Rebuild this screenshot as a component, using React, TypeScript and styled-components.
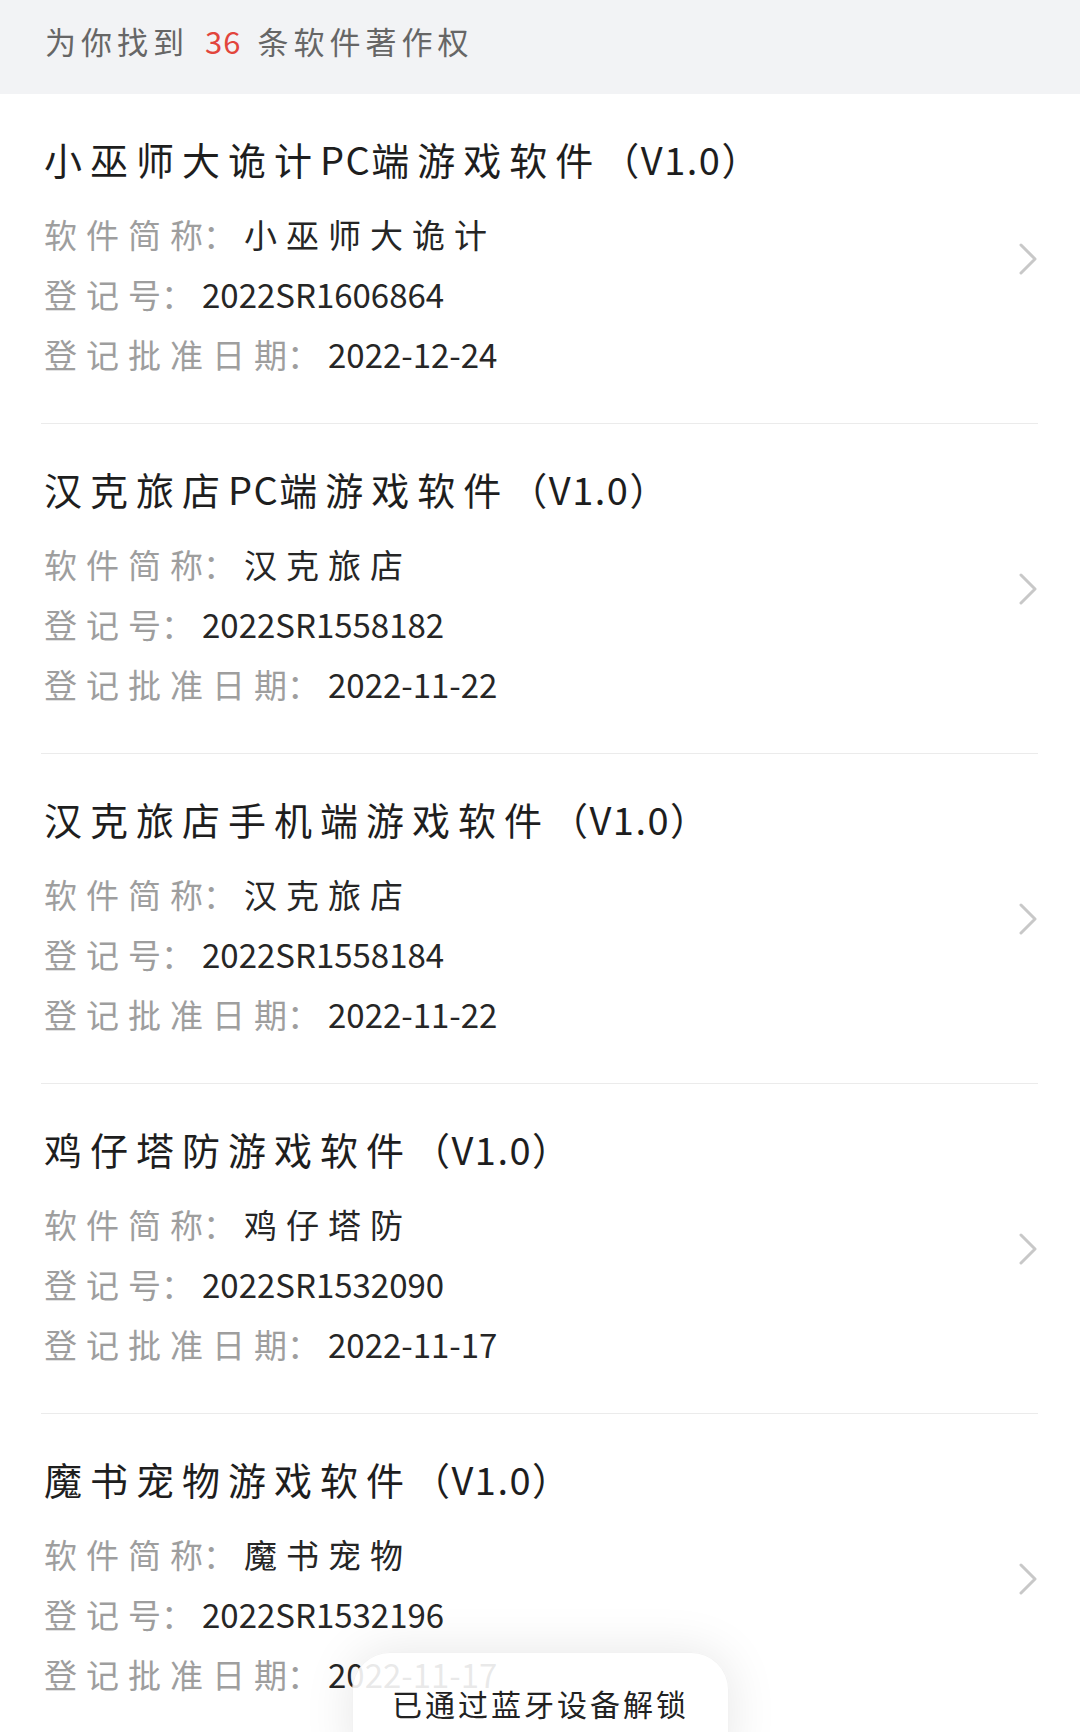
import React from "react";
import styled, { createGlobalStyle } from "styled-components";

const GlobalStyle = createGlobalStyle`
  html, body {
    margin: 0;
    padding: 0;
    background: #ffffff;
  }
  body {
    font-family: "Noto Sans CJK SC", "Noto Sans", sans-serif;
  }
`;

const Page = styled.div`
  position: relative;
  width: 1080px;
  height: 1732px;
  overflow: hidden;
  background: #ffffff;
  font-family: "Noto Sans CJK SC", "Noto Sans", sans-serif;
`;

const Header = styled.div`
  height: 94px;
  background: #f2f3f5;
  display: flex;
  align-items: center;
  padding: 0 0 14px 45px;
  box-sizing: border-box;
  font-size: 31px;
  letter-spacing: 5px;
  color: #666666;
`;

const Count = styled.span`
  color: #e2453c;
  letter-spacing: 1px;
  margin: 0 16px 0 16px;
`;

const List = styled.div`
  margin: 0 42px 0 41px;
`;

const Item = styled.div`
  display: flex;
  align-items: center;
  border-bottom: 1px solid #ebebeb;
  height: 330px;
  box-sizing: border-box;
`;

const Content = styled.div`
  flex: 1;
  display: flex;
  flex-direction: column;
  padding: 37px 0 39px 3px;
`;

const Title = styled.div`
  font-size: 38px;
  line-height: 55px;
  letter-spacing: 8px;
  color: #1e1e1e;
  white-space: nowrap;
  margin-bottom: 18px;
`;

const Row = styled.div`
  font-size: 33px;
  line-height: 60px;
  letter-spacing: 9px;
  white-space: nowrap;
  display: flex;
`;

const Label = styled.span`
  color: #9e9e9e;
`;

const LastChar = styled.span`
  letter-spacing: 0;
`;

const Colon = styled.span`
  letter-spacing: 8px;
`;

const Value = styled.span`
  color: #262626;
`;

const Latin = styled.span<{ $spacing: number }>`
  letter-spacing: ${(p) => p.$spacing}px;
`;

const Chevron = styled.svg`
  width: 20px;
  height: 32px;
  flex-shrink: 0;
`;

const Toast = styled.div`
  position: absolute;
  left: 352px;
  top: 1652px;
  width: 377px;
  height: 120px;
  box-sizing: border-box;
  border-radius: 38px;
  background: rgba(255, 255, 255, 0.9);
  border: 1px solid rgba(0, 0, 0, 0.05);
  box-shadow: 0 0 50px rgba(0, 0, 0, 0.1);
  display: flex;
  justify-content: center;
  padding-top: 31px;
  font-size: 30px;
  line-height: 38px;
  letter-spacing: 3px;
  color: #222222;
`;

function Mixed({ text, latin }: { text: string; latin: number }) {
  const parts = text.split(/([A-Za-z0-9.\-（）]+)/);
  return (
    <>
      {parts.map((p, i) =>
        /^[A-Za-z0-9.\-（）]+$/.test(p) ? (
          <Latin key={i} $spacing={latin}>
            {p}
          </Latin>
        ) : (
          <React.Fragment key={i}>{p}</React.Fragment>
        )
      )}
    </>
  );
}

function Field({ label, children }: { label: string; children: React.ReactNode }) {
  return (
    <Row>
      <Label>
        {label.slice(0, -1)}
        <LastChar>{label.slice(-1)}</LastChar>
        <Colon>：</Colon>
      </Label>
      <Value>{children}</Value>
    </Row>
  );
}

type Record = {
  title: string;
  short: string;
  reg: string;
  date: string;
};

const records: Record[] = [
  { title: "小巫师大诡计PC端游戏软件（V1.0）", short: "小巫师大诡计", reg: "2022SR1606864", date: "2022-12-24" },
  { title: "汉克旅店PC端游戏软件（V1.0）", short: "汉克旅店", reg: "2022SR1558182", date: "2022-11-22" },
  { title: "汉克旅店手机端游戏软件（V1.0）", short: "汉克旅店", reg: "2022SR1558184", date: "2022-11-22" },
  { title: "鸡仔塔防游戏软件（V1.0）", short: "鸡仔塔防", reg: "2022SR1532090", date: "2022-11-17" },
  { title: "魔书宠物游戏软件（V1.0）", short: "魔书宠物", reg: "2022SR1532196", date: "2022-11-17" },
];

export default function App() {
  return (
    <Page>
      <GlobalStyle />
      <Header>
        为你找到<Count>36</Count>条软件著作权
      </Header>
      <List>
        {records.map((r) => (
          <Item key={r.reg}>
            <Content>
              <Title>
                <Mixed text={r.title} latin={1.5} />
              </Title>
              <Field label="软件简称">{r.short}</Field>
              <Field label="登记号">
                <Mixed text={r.reg} latin={0} />
              </Field>
              <Field label="登记批准日期">
                <Mixed text={r.date} latin={0} />
              </Field>
            </Content>
            <Chevron viewBox="0 0 20 32">
              <polyline
                points="3,2 17,16 3,30"
                fill="none"
                stroke="#c8c8c8"
                strokeWidth="3"
                strokeLinecap="round"
                strokeLinejoin="round"
              />
            </Chevron>
          </Item>
        ))}
      </List>
      <Toast>已通过蓝牙设备解锁</Toast>
    </Page>
  );
}
